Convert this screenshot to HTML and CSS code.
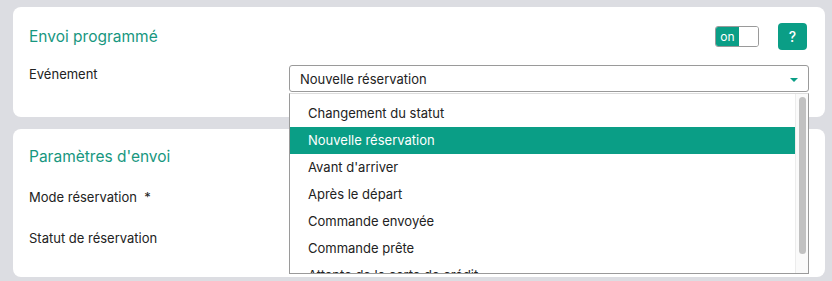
FILE: index.html
```html
<!DOCTYPE html>
<html lang="fr">
<head>
  <meta charset="UTF-8" />
  <meta name="viewport" content="width=device-width, initial-scale=1.0"/>
  <title>Envoi programmé</title>
  <link rel="stylesheet" href="styles.css">
</head>
<body>
  <div class="card">
    <div class="card-head">
      <h2>Envoi programmé</h2>
      <div class="head-tools">
        <div class="toggle"><span class="toggle-on">on</span><span class="toggle-off"></span></div>
        <button class="help" type="button">?</button>
      </div>
    </div>

    <div class="field">
      <label>Evénement</label>
      <div class="select-wrap">
        <div class="select">
          <span>Nouvelle réservation</span>
          <span class="caret"></span>
        </div>
        <div class="dropdown">
          <ul class="options">
            <li>Changement du statut</li>
            <li class="active">Nouvelle réservation</li>
            <li>Avant d'arriver</li>
            <li>Après le départ</li>
            <li>Commande envoyée</li>
            <li>Commande prête</li>
            <li>Attente de la carte de crédit</li>
          </ul>
          <div class="scrollbar"><div class="thumb"></div></div>
        </div>
      </div>
    </div>
  </div>

  <div class="card">
    <div class="card-head">
      <h2>Paramètres d'envoi</h2>
    </div>
    <div class="field">
      <label>Mode réservation &nbsp;*</label>
      <div class="select"></div>
    </div>
    <div class="field">
      <label>Statut de réservation</label>
      <div class="select"></div>
    </div>
  </div>
</body>
</html>
```

FILE: styles.css
```css
body {
  margin: 0;
  padding: 7px 7px 0 13px;
  background: #dcdde2;
  font-family: Inter, "Noto Sans", sans-serif;
  font-size: 13px;
  color: #222;
}

.card {
  background: white;
  border-radius: 8px;
  padding: 16px 16px 25px 16px;
  margin-bottom: 12px;
}

.card + .card {
  padding-bottom: 21px;
}

.card-head {
  display: flex;
  align-items: center;
  justify-content: space-between;
  height: 27px;
}

h2 {
  margin: 0;
  font-size: 15.5px;
  font-weight: 400;
  color: #17977f;
}

.card + .card .card-head {
  height: 22px;
  margin-bottom: 21px;
}

.card + .card .field {
  margin-top: 0;
  margin-bottom: 14px;
}

.card + .card .field:last-child {
  margin-bottom: 0;
}

.head-tools {
  display: flex;
  align-items: center;
  gap: 19px;
  margin-right: 2px;
}

.toggle {
  display: flex;
  width: 44px;
  height: 21px;
  border: 1px solid #9a9a9a;
  border-radius: 3px;
  overflow: hidden;
  box-sizing: border-box;
}

.toggle-on {
  width: 23px;
  background: #0a9e86;
  color: white;
  font-size: 12px;
  line-height: 19px;
  text-align: center;
}

.toggle-off {
  flex: 1;
  background: white;
}

.help {
  width: 29px;
  height: 27px;
  border: none;
  border-radius: 4px;
  background: #0a9e86;
  color: white;
  font-family: Inter, sans-serif;
  font-size: 14px;
  font-weight: 500;
  padding: 0;
}

.field {
  display: flex;
  margin-top: 15px;
}

.field label {
  width: 260px;
  line-height: 18px;
  flex-shrink: 0;
}

.select-wrap {
  position: relative;
  flex: 1;
}

.select {
  flex: 1;
  display: flex;
  align-items: center;
  justify-content: space-between;
  height: 27px;
  box-sizing: border-box;
  border: 1px solid #9a9a9a;
  border-radius: 3px;
  padding: 0 10px 0 10px;
  background: white;
}

.caret {
  width: 0;
  height: 0;
  border-left: 4px solid transparent;
  border-right: 4px solid transparent;
  border-top: 4px solid #0a9e86;
  margin-top: 2px;
}

.dropdown {
  position: absolute;
  top: 28px;
  left: 0;
  right: 0;
  z-index: 5;
  height: 181px;
  display: flex;
  background: white;
  border: 1px solid #9a9a9a;
  border-top-color: #ddd;
  box-sizing: border-box;
  overflow: hidden;
}

.options {
  flex: 1;
  margin: 0;
  padding: 6px 0;
  list-style: none;
}

.options li {
  height: 27px;
  line-height: 27px;
  padding-left: 18px;
  white-space: nowrap;
}

.options li.active {
  background: #0a9e86;
  color: white;
}

.scrollbar {
  width: 13px;
  background: #fafafa;
  border-left: 1px solid #ececec;
  padding: 3px 0;
  box-sizing: border-box;
}

.thumb {
  width: 7px;
  height: 157px;
  margin: 0 auto;
  background: #c1c1c1;
  border-radius: 4px;
}
```
